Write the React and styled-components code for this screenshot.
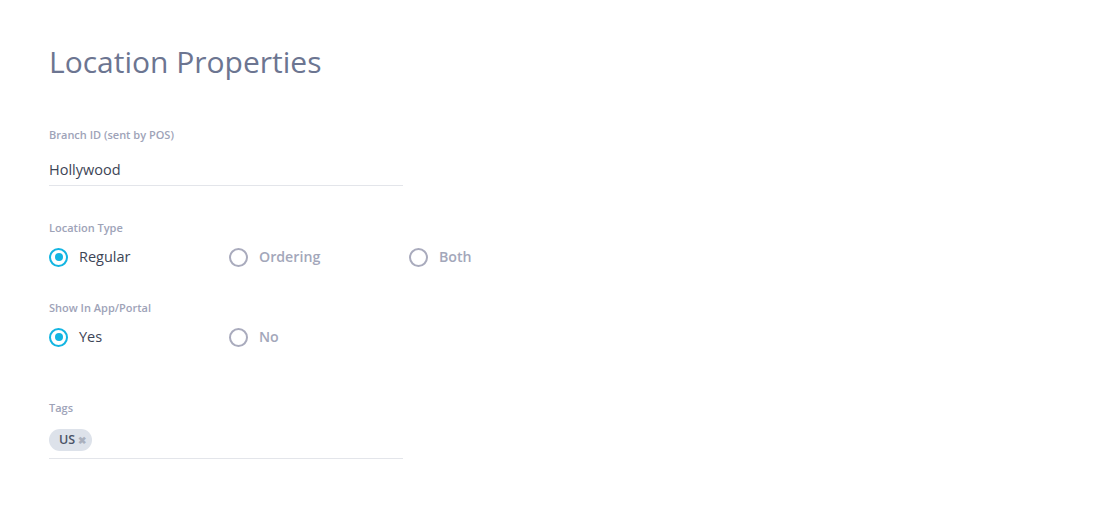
import React from 'react';
import styled, { createGlobalStyle } from 'styled-components';

const GlobalStyle = createGlobalStyle`
body {
  margin: 0;
  background: #fff;
  font-family: "Open Sans", "Noto Sans", sans-serif;
}
`;

const locationTypes = ["Regular", "Ordering", "Both"];
const showOptions = ["Yes", "No"];

const RadioGroup = ({ options, value }) => (
  <RadioRow>
    {options.map(option => (
      <RadioItem key={option}>
        <RadioCircle checked={option === value} />
        <RadioLabel checked={option === value}>{option}</RadioLabel>
      </RadioItem>
    ))}
  </RadioRow>
);

const App = () => {
  return (<Page>
    <GlobalStyle />
    <Title>Location Properties</Title>

    <Field gap={16}>
      <Label>Branch ID (sent by POS)</Label>
      <Input>Hollywood</Input>
    </Field>

    <Field top={34}>
      <Label>Location Type</Label>
      <RadioGroup options={locationTypes} value="Regular" />
    </Field>

    <Field top={32}>
      <Label>Show In App/Portal</Label>
      <RadioGroup options={showOptions} value="Yes" />
    </Field>

    <Field top={52} gap={11}>
      <Label>Tags</Label>
      <TagBox>
        <Tag>US<TagClose>✖</TagClose></Tag>
      </TagBox>
    </Field>
  </Page>
  )
}

export default App;

const Page = styled.div`
display: flex;
flex-direction: column;
padding: 42px 49px 0;
`;

const Title = styled.h1`
margin: 0 0 45px;
font-size: 30px;
font-weight: 400;
line-height: 40px;
color: #6c7591;
`;

const Field = styled.div`
display: flex;
flex-direction: column;
gap: ${({ gap }) => gap ?? 10}px;
margin-top: ${({ top }) => top ?? 0}px;
`;

const Label = styled.label`
font-size: 11px;
font-weight: 600;
line-height: 16px;
color: #9ea3b8;
`;

const Input = styled.div`
width: 354px;
height: 26px;
font-size: 14.5px;
line-height: 22px;
color: #3d4556;
border-bottom: 1px solid #e3e5ea;
`;

const RadioRow = styled.div`
display: flex;
flex-direction: row;
height: 22px;
`;

const RadioItem = styled.div`
display: flex;
align-items: center;
width: 180px;
gap: 11px;
`;

const RadioCircle = styled.span`
position: relative;
box-sizing: border-box;
width: 19px;
height: 19px;
border-radius: 50%;
border: 2px solid ${({ checked }) => checked ? "#13b5e2" : "#a9abbd"};
&::after {
  content: "";
  display: ${({ checked }) => checked ? "block" : "none"};
  position: absolute;
  top: 3.5px;
  left: 3.5px;
  width: 8px;
  height: 8px;
  border-radius: 50%;
  background: #13b5e2;
}
`;

const RadioLabel = styled.span`
font-size: ${({ checked }) => checked ? 14.5 : 14.2}px;
font-weight: ${({ checked }) => checked ? 400 : 600};
line-height: 22px;
color: ${({ checked }) => checked ? "#3d4556" : "#a3a7ba"};
`;

const TagBox = styled.div`
width: 354px;
height: 31px;
border-bottom: 1px solid #e3e5ea;
`;

const Tag = styled.span`
display: inline-flex;
align-items: center;
gap: 3px;
height: 22px;
padding: 0 6px 0 10px;
border-radius: 11px;
background: #dde2ea;
font-size: 12.5px;
font-weight: 600;
color: #4b5366;
`;

const TagClose = styled.span`
font-size: 10px;
color: #aab0bd;
`;
